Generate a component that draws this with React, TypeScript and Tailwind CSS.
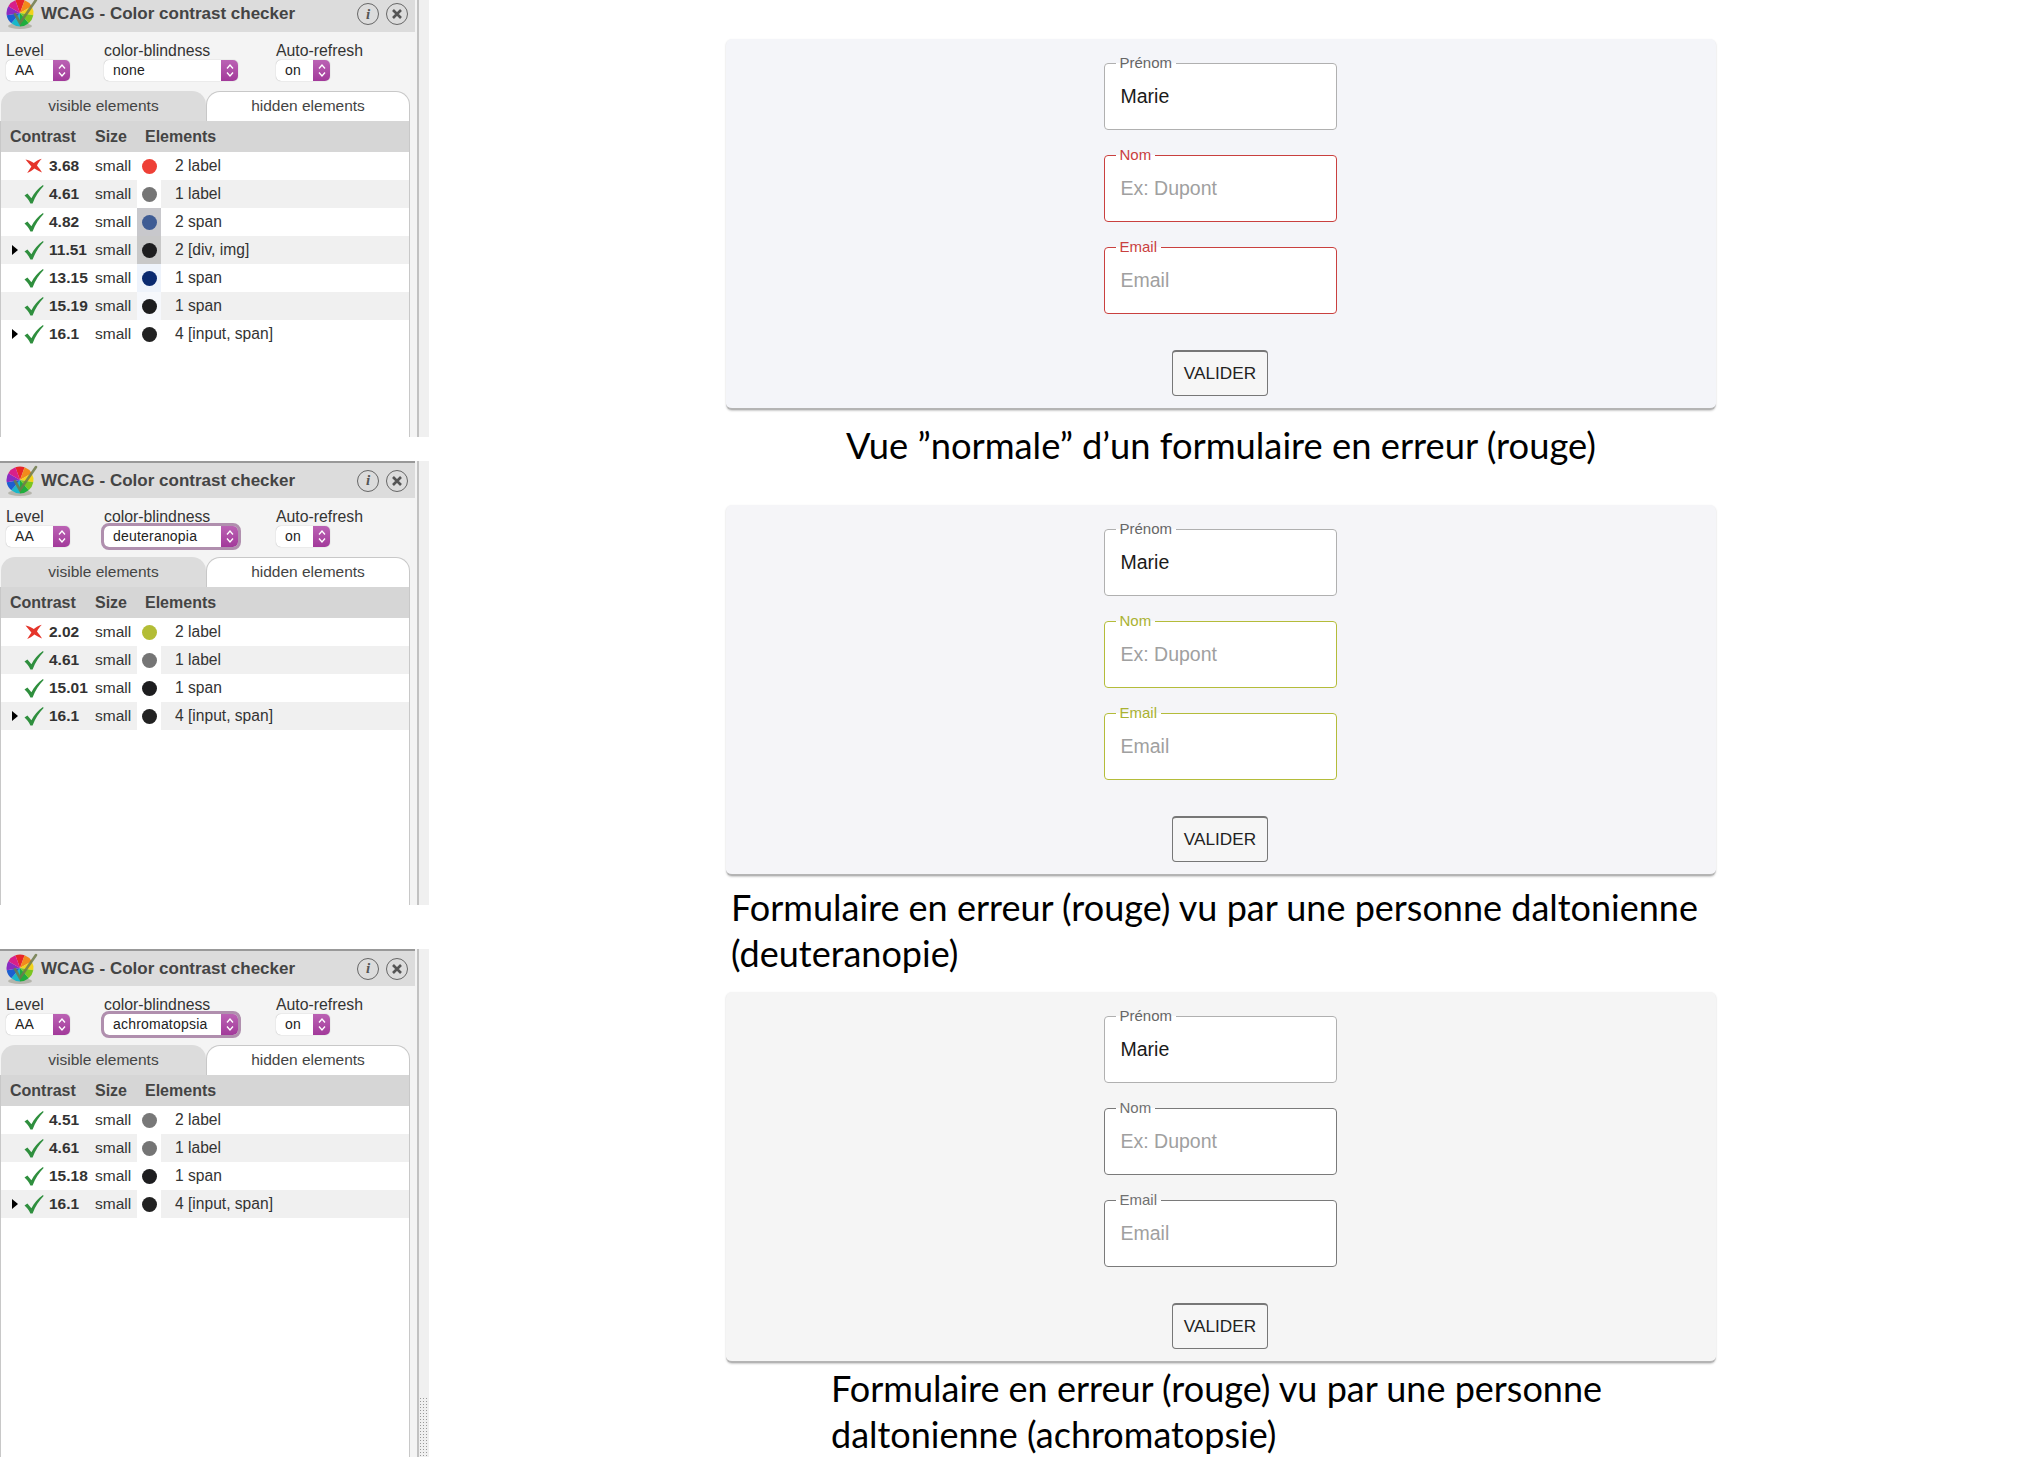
const wedges = ['#e8262a', '#f28a1c', '#f2d31b', '#7cc520', '#1fae3c', '#19b7c9', '#1c5fd0', '#8a2bc2', '#d81f8a']

function Logo() {
  return (
    <svg width="36" height="32" viewBox="0 0 36 32" className="shrink-0 blur-[0.4px]">
      <ellipse cx="18" cy="28" rx="12" ry="3" fill="#9a9a8a" opacity="0.6" />
      {wedges.map((c, i) => {
        const a0 = ((i * 40 - 110) * Math.PI) / 180
        const a1 = (((i + 1) * 40 - 110) * Math.PI) / 180
        const d = `M18 15 L${18 + 13.5 * Math.cos(a0)} ${15 + 13.5 * Math.sin(a0)} A13.5 13.5 0 0 1 ${18 + 13.5 * Math.cos(a1)} ${15 + 13.5 * Math.sin(a1)} Z`
        return <path key={i} d={d} fill={c} />
      })}
      <path d="M13 16 L18 25 L34 2" fill="none" stroke="#6f7a4a" strokeWidth="2.6" strokeLinecap="round" opacity="0.85" />
    </svg>
  )
}

function Check() {
  return (
    <svg width="20" height="20" viewBox="0 0 20 20" className="shrink-0">
      <path d="M0.5 11.5 L3.4 9.4 L7.4 14.2 C10 9 14 4.6 19 1 L19.6 2 C15 6.6 11.4 12.4 8.6 19.4 L6.4 19.4 C4.8 16 3 13.6 0.5 11.5 Z" fill="#2f8f3e" />
    </svg>
  )
}

function Cross() {
  return (
    <svg width="20" height="20" viewBox="0 0 20 20" className="shrink-0">
      <path d="M1.5 3.5 C4.5 4 7 5.4 9.8 7 C12 5.2 14.5 3.8 17.8 2.8 C15.8 5 14.2 7 13 9.4 C14.8 11.6 16.4 13.6 18 16.4 C15 15.2 12.6 14 10.4 12.6 C8.4 14.4 6.2 16 3.2 17 C4.6 14.6 6 12.6 7.4 10.4 C5.4 8 3.4 6 1.5 3.5 Z" fill="#e5352b" />
    </svg>
  )
}

function Chevrons() {
  return (
    <svg width="10" height="15" viewBox="0 0 10 15">
      <path d="M2 5.5 L5 2 L8 5.5 M2 9.5 L5 13 L8 9.5" fill="none" stroke="#fff" strokeWidth="1.3" />
    </svg>
  )
}

function Select({ value, wide, focused }: { value: string; wide: string; focused?: boolean }) {
  return (
    <div
      className={`flex h-[21px] items-stretch rounded-[5px] bg-white shadow-[0_0_1px_#999] ${wide} ${
        focused ? 'outline-[3px] outline-[#b08fae]' : ''
      }`}
    >
      <span className="flex-1 pl-[9px] text-[14px] leading-[21px] tracking-[0.2px] text-[#222]">{value}</span>
      <span className="flex w-[17px] items-center justify-center rounded-r-[5px] bg-gradient-to-b from-[#bb62b4] to-[#a2399a]">
        <Chevrons />
      </span>
    </div>
  )
}

interface Row {
  ok: boolean
  value: string
  dot: string
  cell: string
  label: string
  arrow?: boolean
}

function ResultRow({ row, index }: { row: Row; index: number }) {
  return (
    <div className={`flex h-[28px] items-center ${index % 2 === 1 ? 'bg-[#f0f0f0]' : 'bg-white'}`}>
      <span className="flex w-[21px] shrink-0 justify-end pr-[4px]">
        {row.arrow && <span className="h-0 w-0 border-y-[5px] border-l-[6px] border-y-transparent border-l-black" />}
      </span>
      <span className="flex w-[23px] shrink-0 justify-center">{row.ok ? <Check /> : <Cross />}</span>
      <span className="w-[50px] shrink-0 pl-[4px] text-[15.5px] font-bold text-[#333]">{row.value}</span>
      <span className="w-[42px] shrink-0 text-[15.5px] text-[#333]">small</span>
      <span className={`flex h-full w-[24px] shrink-0 items-center justify-center ${row.cell}`}>
        <span className={`h-[15px] w-[15px] rounded-full ${row.dot}`} />
      </span>
      <span className="pl-[14px] text-[15.6px] text-[#333]">{row.label}</span>
    </div>
  )
}

interface PanelProps {
  height: string
  cropped?: boolean
  select: string
  focused?: boolean
  rows: Row[]
  grip?: boolean
}

function Panel({ height, cropped, select, focused, rows, grip }: PanelProps) {
  return (
    <div className={`flex w-[429px] ${height}`}>
      <div className="flex w-[417px] flex-col bg-[#f4f4f4]">
        {/* Title */}
        <div
          className={`flex w-[415px] items-center bg-[#dcdcdc] pl-[2px] pr-[7px] ${
            cropped ? 'h-[32px] pb-[4px]' : 'h-[37px] border-t-2 border-[#999]'
          }`}
        >
          <Logo />
          <span className="ml-[3px] flex-1 text-[17px] font-bold text-[#444]">WCAG - Color contrast checker</span>
          <span className="mr-[7px] flex h-[22px] w-[22px] items-center justify-center rounded-full border border-[#666] font-['Liberation_Serif',serif] text-[15px] font-bold italic text-[#555]">
            i
          </span>
          <span className="flex h-[22px] w-[22px] items-center justify-center rounded-full border border-[#666]">
            <svg width="12" height="12" viewBox="0 0 12 12">
              <path d="M2 2 L10 10 M10 2 L2 10" stroke="#555" strokeWidth="2.6" />
            </svg>
          </span>
        </div>

        {/* Options */}
        <div className="flex gap-0 pl-[6px] pt-[9px]">
          <div className="w-[98px]">
            <div className="h-[19px] text-[15.8px] leading-[19px] text-[#333]">Level</div>
            <Select value="AA" wide="w-[64px]" />
          </div>
          <div className="w-[172px]">
            <div className="h-[19px] text-[15.8px] leading-[19px] text-[#333]">color-blindness</div>
            <Select value={select} wide="w-[134px]" focused={focused} />
          </div>
          <div>
            <div className="h-[19px] text-[15.8px] leading-[19px] text-[#333]">Auto-refresh</div>
            <Select value="on" wide="w-[54px]" />
          </div>
        </div>

        {/* Tabs */}
        <div className="mt-[10px] flex h-[30px] w-[410px] pl-[1px] text-[15.5px] text-[#444]">
          <div className="flex w-[205px] items-center justify-center rounded-t-[14px] bg-[#dcdcdc]">visible elements</div>
          <div className="flex flex-1 items-center justify-center rounded-t-[14px] border-x border-t border-[#c8c8c8] bg-white pb-[1px]">
            hidden elements
          </div>
        </div>

        {/* Table */}
        <div className="flex w-[410px] flex-1 flex-col border-x border-[#c8c8c8] bg-white">
          <div className="flex h-[31px] shrink-0 items-center bg-[#d6d6d6] text-[16px] font-bold text-[#444]">
            <span className="w-[94px] pl-[9px]">Contrast</span>
            <span className="w-[50px]">Size</span>
            <span>Elements</span>
          </div>
          {rows.map((r, i) => (
            <ResultRow key={i} row={r} index={i} />
          ))}
        </div>
      </div>

      {/* Scrollbar */}
      <div className="w-[2px] bg-[#c2c2c2]" />
      <div className="flex w-[10px] flex-col justify-end bg-[#f0f0f0]">
        {grip && (
          <div className="h-[60px] bg-[radial-gradient(#999_35%,transparent_40%)] bg-[length:3px_3px]" />
        )}
      </div>
    </div>
  )
}

function Field({ label, value, placeholder, color }: { label: string; value?: string; placeholder?: string; color: string }) {
  return (
    <fieldset className={`h-[75px] w-[233px] rounded-[4px] border bg-white ${color}`}>
      <legend className="ml-[11px] px-[4px] text-[15px] leading-[16px]">{label}</legend>
      <div className={`pl-[16px] pt-[12px] text-[19.5px] leading-[26px] ${value ? 'text-[#1a1a1a]' : 'text-[#a0a0a0]'}`}>
        {value ?? placeholder}
      </div>
    </fieldset>
  )
}

function FormCard({ bg, error }: { bg: string; error: string }) {
  return (
    <div className={`flex h-[371px] w-[990px] shrink-0 flex-col items-center rounded-[6px] border-b-2 border-[#b4b4b4] pt-[16px] shadow-[0_1px_2px_#ccc] ${bg}`}>
      <div className="flex -translate-x-[1px] flex-col gap-[17px]">
        <Field label="Prénom" value="Marie" color="border-[#b0b0b0] text-[#666]" />
        <Field label="Nom" placeholder="Ex: Dupont" color={error} />
        <Field label="Email" placeholder="Email" color={error} />
      </div>
      <button className="mt-[36px] h-[46px] w-[96px] -translate-x-[1px] rounded-[4px] border border-t-2 border-[#777] bg-[#f6f6f6] text-[17.2px] text-[#222]">
        VALIDER
      </button>
    </div>
  )
}

const normalRows: Row[] = [
  { ok: false, value: '3.68', dot: 'bg-[#ee4036]', cell: 'bg-white', label: '2 label' },
  { ok: true, value: '4.61', dot: 'bg-[#757575]', cell: 'bg-white', label: '1 label' },
  { ok: true, value: '4.82', dot: 'bg-[#3f5c94]', cell: 'bg-[#c8c8cc]', label: '2 span' },
  { ok: true, value: '11.51', dot: 'bg-[#1d1d1f]', cell: 'bg-[#c8c8c8]', label: '2 [div, img]', arrow: true },
  { ok: true, value: '13.15', dot: 'bg-[#0b2a6f]', cell: 'bg-[#eef3fb]', label: '1 span' },
  { ok: true, value: '15.19', dot: 'bg-[#1d1d1f]', cell: 'bg-[#f6f8fc]', label: '1 span' },
  { ok: true, value: '16.1', dot: 'bg-[#222]', cell: 'bg-white', label: '4 [input, span]', arrow: true },
]

const deuterRows: Row[] = [
  { ok: false, value: '2.02', dot: 'bg-[#b3bd36]', cell: 'bg-white', label: '2 label' },
  { ok: true, value: '4.61', dot: 'bg-[#757575]', cell: 'bg-white', label: '1 label' },
  { ok: true, value: '15.01', dot: 'bg-[#1d1d1f]', cell: 'bg-white', label: '1 span' },
  { ok: true, value: '16.1', dot: 'bg-[#222]', cell: 'bg-white', label: '4 [input, span]', arrow: true },
]

const achromaRows: Row[] = [
  { ok: true, value: '4.51', dot: 'bg-[#787878]', cell: 'bg-white', label: '2 label' },
  { ok: true, value: '4.61', dot: 'bg-[#757575]', cell: 'bg-white', label: '1 label' },
  { ok: true, value: '15.18', dot: 'bg-[#1d1d1f]', cell: 'bg-white', label: '1 span' },
  { ok: true, value: '16.1', dot: 'bg-[#222]', cell: 'bg-white', label: '4 [input, span]', arrow: true },
]

export default function App() {
  return (
    <div className="flex h-[1459px] w-[2021px] overflow-hidden bg-white font-['Liberation_Sans',Arial,sans-serif]">
      <div className="flex w-[726px] shrink-0 flex-col">
        <Panel height="h-[437px]" cropped select="none" rows={normalRows} />
        <div className="h-[24px]" />
        <Panel height="h-[444px]" select="deuteranopia" focused rows={deuterRows} />
        <div className="h-[44px]" />
        <Panel height="h-[508px]" select="achromatopsia" focused rows={achromaRows} grip />
      </div>

      <div className="flex w-[990px] flex-col pt-[39px]">
        <FormCard bg="bg-[#f4f5f9]" error="border-[#c9403f] text-[#c9403f]" />
        <p className="h-[95px] pt-[12px] text-center font-['Lato',sans-serif] text-[36.3px] leading-[46px] text-black">
          Vue ”normale” d’un formulaire en erreur (rouge)
        </p>
        <FormCard bg="bg-[#f5f5f8]" error="border-[#b4bc3a] text-[#aab232]" />
        <p className="h-[116px] pl-[5px] pt-[8px] font-['Lato',sans-serif] text-[36px] leading-[46px] text-black">
          Formulaire en erreur (rouge) vu par une personne daltonienne
          <br />
          (deuteranopie)
        </p>
        <FormCard bg="bg-[#f5f5f5]" error="border-[#7a7a7a] text-[#707070]" />
        <p className="pl-[105px] pt-[2px] font-['Lato',sans-serif] text-[36px] leading-[46px] text-black">
          Formulaire en erreur (rouge) vu par une personne
          <br />
          daltonienne (achromatopsie)
        </p>
      </div>
    </div>
  )
}
